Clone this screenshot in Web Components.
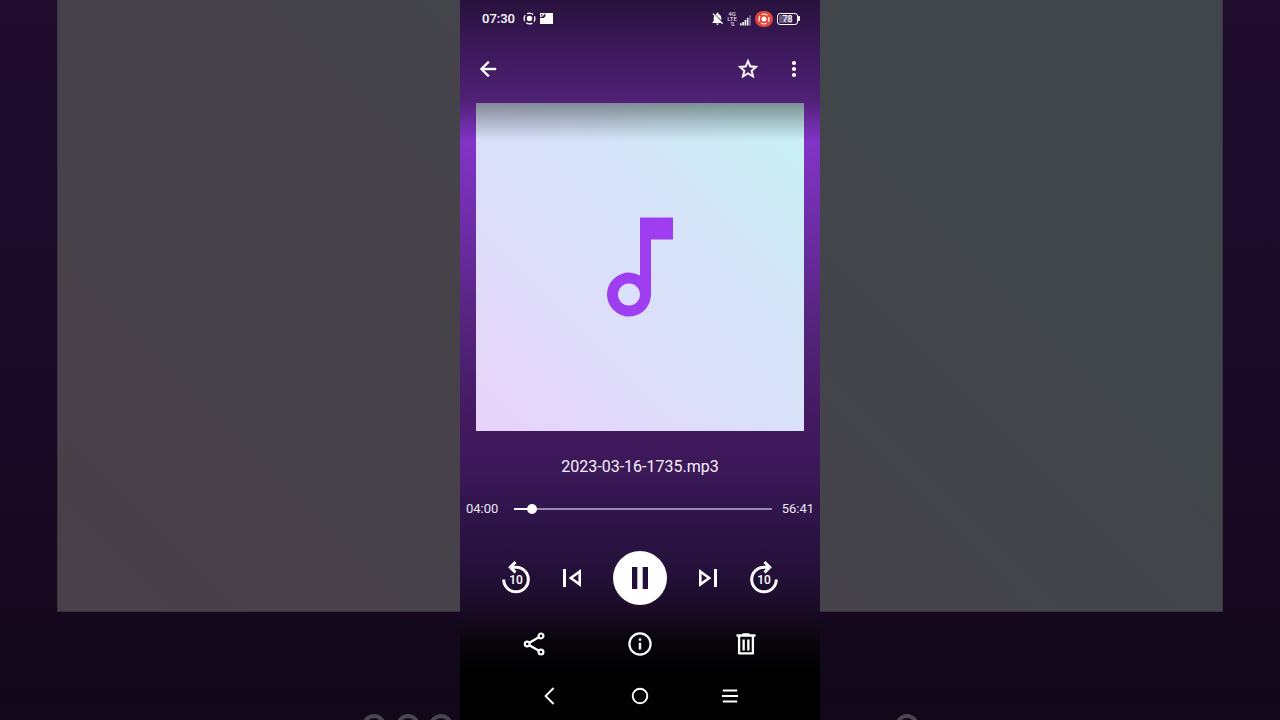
<!DOCTYPE html>
<html lang="en">
<head>
<meta charset="utf-8">
<meta name="viewport" content="width=device-width, initial-scale=1">
<title>Audio player</title>
<style>
  body {
    margin: 0;
    background: #000;
    color: #fff;
    font-family: Roboto, "Liberation Sans", sans-serif;
  }
</style>
</head>
<body>
<audio-page track="2023-03-16-1735.mp3"></audio-page>

<script>
const ICONS = {
  back: '<path fill="currentColor" stroke="currentColor" stroke-width=".4" d="M20 11H7.83l5.59-5.59L12 4l-8 8 8 8 1.41-1.41L7.83 13H20z"/>',
  star: '<path fill="currentColor" stroke="currentColor" stroke-width=".4" d="M22 9.24l-7.19-.62L12 2 9.19 8.63 2 9.24l5.46 4.73L5.82 21 12 17.27 18.18 21l-1.63-7.03zM12 15.4l-3.76 2.27 1-4.28-3.32-2.88 4.38-.38L12 6.1l1.71 4.04 4.38.38-3.32 2.88 1 4.28z"/>',
  more: '<g fill="currentColor"><circle cx="12" cy="6" r="2.1"/><circle cx="12" cy="12" r="2.1"/><circle cx="12" cy="18" r="2.1"/></g>',
  note: '<path fill="currentColor" fill-rule="evenodd" d="M12 3v10.55A4 4 0 1 0 14 17V7h4V3zM10 19a2 2 0 1 1 0-4 2 2 0 0 1 0 4z"/>',
  previous: '<path fill="currentColor" d="M3 3h3v18H3z"/><path fill="none" stroke="currentColor" stroke-width="2.6" d="M19.7 5.5L10.8 12l8.9 6.5z"/>',
  next: '<path fill="currentColor" d="M18 3h3v18h-3z"/><path fill="none" stroke="currentColor" stroke-width="2.6" d="M4.3 5.5l8.9 6.5-8.9 6.5z"/>',
  pause: '<path fill="currentColor" d="M4 1h5.3v22H4zM14.7 1H20v22h-5.3z"/>',
  share: '<g fill="none" stroke="currentColor" stroke-width="2.2"><circle cx="5.2" cy="12" r="2.4"/><circle cx="19" cy="3.9" r="2.4"/><circle cx="19" cy="20.1" r="2.4"/><path d="M7.4 10.8l9.4-5.6M7.4 13.2l9.4 5.6"/></g>',
  info: '<circle cx="12" cy="12" r="10.6" fill="none" stroke="currentColor" stroke-width="2.2"/><path fill="currentColor" d="M10.8 10.8h2.4v6.8h-2.4zM10.8 6.4h2.4v2.4h-2.4z"/>',
  trash: '<path fill="currentColor" d="M2.5 2.2h6V1.2h7v1h6v2.6h-19z"/><path fill="none" stroke="currentColor" stroke-width="2.3" stroke-linejoin="round" d="M5.1 4v17.4h13.8V4"/><path fill="currentColor" d="M8.5 7.5h2.3v11H8.5zM13.2 7.5h2.3v11h-2.3z"/>',
  navBack: '<path fill="none" stroke="currentColor" stroke-width="1.9" d="M15.600 4l-8 8 8 8"/>',
  navHome: '<circle cx="12" cy="12" r="7.3" fill="none" stroke="currentColor" stroke-width="1.9"/>',
  navMenu: '<path stroke="currentColor" stroke-width="1.9" d="M4.800 6.500h14.400M4 12h16M4.800 17.500h14.400"/>',
  record: '<circle cx="12" cy="12" r="5" fill="currentColor"/><circle cx="12" cy="12" r="10" fill="none" stroke="currentColor" stroke-width="2.400" stroke-dasharray="11.7 4" stroke-dashoffset="5.8"/>',
  card: '<path fill="currentColor" d="M10 2h14v20H0V11h7l3-3z"/><path fill="none" stroke="currentColor" stroke-width="2" d="M1 9V3h7L3 8.500"/>',
  bell: '<path fill="currentColor" d="M20 18.69L7.84 6.14 5.27 3.49 4 4.76l2.8 2.8C6.28 8.56 6 9.73 6 11v5l-2 2v1h13.73l2 2L21 19.73zM12 22c1.11 0 2-.89 2-2h-4c0 1.11.89 2 2 2zM18 14.68V11c0-3.08-1.64-5.64-4.5-6.32V4a1.5 1.5 0 0 0-3 0v.68c-.72.17-1.36.46-1.94.82z"/>',
  signal: '<path fill="currentColor" d="M0 18h3.500v5H0zM5 15h3.500v8H5zM10 11h3.500v12H10zM15 6h3.500v17H15z"/><path fill="currentColor" opacity=".4" d="M20 1h3.500v22H20z"/>'
}

class UiIcon extends HTMLElement {
  static get observedAttributes() {
    return ['name']
  }

  constructor() {
    super()
    this.attachShadow({ mode: 'open' })
  }

  connectedCallback() {
    this.render()
  }

  attributeChangedCallback() {
    if (this.isConnected) {
      this.render()
    }
  }

  render() {
    this.shadowRoot.innerHTML = `
      <style>
        :host {
          display: block;
          width: var(--size, 24px);
          height: var(--size, 24px);
        }

        svg {
          display: block;
          width: 100%;
          height: 100%;
        }
      </style>
      <svg viewBox="0 0 24 24" aria-hidden="true">${ICONS[this.getAttribute('name')] || ''}</svg>
    `
  }
}

class IconButton extends HTMLElement {
  constructor() {
    super()
    this.attachShadow({ mode: 'open' })
  }

  connectedCallback() {
    this.shadowRoot.innerHTML = `
      <style>
        :host {
          display: block;
        }

        button {
          display: grid;
          place-items: center;
          width: var(--box, 36px);
          height: var(--box, 36px);
          padding: 0;
          border: 0;
          border-radius: 50%;
          background: none;
          color: inherit;
          font: inherit;
          cursor: pointer;
        }

        :host([filled]) button {
          background: #fff;
          color: #22103a;
        }
      </style>
      <button type="button" aria-label="${this.getAttribute('label')}"><slot></slot></button>
    `
  }
}

// Circular arrow with the number of seconds inside
class SeekIcon extends HTMLElement {
  constructor() {
    super()
    this.attachShadow({ mode: 'open' })
  }

  connectedCallback() {
    const arrow = this.hasAttribute('forward')
      ? 'M30.3 19.5A12.3 12.3 0 1 1 18 7.2H23M18.5 2l5.2 5.2-5.2 5.2'
      : 'M5.7 19.5A12.3 12.3 0 1 0 18 7.2H13M17.5 2l-5.2 5.2 5.2 5.2'

    this.shadowRoot.innerHTML = `
      <style>
        :host {
          display: grid;
          place-items: center;
        }

        svg, span {
          grid-area: 1 / 1;
        }

        span {
          padding-top: 4px;
          font-size: 12px;
          font-weight: 500;
          line-height: 12px;
        }
      </style>
      <svg width="36" height="36" viewBox="0 0 36 36" fill="none" stroke="currentColor" stroke-width="3" aria-hidden="true"><path d="${arrow}"/></svg>
      <span><slot></slot></span>
    `
  }
}

class StatusBar extends HTMLElement {
  constructor() {
    super()
    this.attachShadow({ mode: 'open' })
  }

  connectedCallback() {
    this.shadowRoot.innerHTML = `
      <style>
        :host {
          display: flex;
          align-items: center;
          justify-content: space-between;
          height: 37px;
          padding: 0 20px 0 22px;
        }

        .group {
          display: flex;
          align-items: center;
          gap: 4px;
        }

        time {
          margin-right: 4px;
          font-size: 13px;
          font-weight: 500;
        }

        .small {
          --size: 13px;
        }

        .bell {
          --size: 15px;
        }

        .network {
          display: grid;
          justify-items: center;
          justify-content: center;
          width: 8px;
          margin-left: -1px;
          color: #e4dcea;
          font-size: 6px;
          font-weight: 500;
          line-height: 5px;
        }

        .signal {
          --size: 11px;
          padding-top: 3px;
        }

        .recording {
          display: grid;
          place-items: center;
          width: 18px;
          height: 16px;
          border-radius: 8px;
          background: #e0463a;
          --size: 12px;
        }

        .battery {
          display: flex;
          align-items: center;
        }

        .battery b {
          box-sizing: border-box;
          width: 21px;
          height: 12px;
          border: 1px solid #fff;
          border-radius: 3px;
          background: linear-gradient(90deg, #66557c 78%, transparent 0) content-box;
          padding: 1px;
          font-size: 9px;
          font-weight: 500;
          line-height: 8px;
          text-align: center;
        }

        .battery::after {
          content: "";
          width: 2px;
          height: 5px;
          border-radius: 0 1px 1px 0;
          background: #fff;
        }
      </style>
      <div class="group">
        <time>07:30</time>
        <ui-icon class="small" name="record"></ui-icon>
        <ui-icon class="small" name="card"></ui-icon>
      </div>
      <div class="group">
        <ui-icon class="bell" name="bell"></ui-icon>
        <div class="network"><span>4G</span><span>LTE</span><span>⇅</span></div>
        <ui-icon class="signal" name="signal"></ui-icon>
        <div class="recording"><ui-icon name="record"></ui-icon></div>
        <div class="battery"><b>78</b></div>
      </div>
    `
  }
}

class SeekBar extends HTMLElement {
  constructor() {
    super()
    this.attachShadow({ mode: 'open' })
  }

  format(seconds) {
    const pad = n => String(n).padStart(2, '0')
    return `${pad(Math.floor(seconds / 60))}:${pad(seconds % 60)}`
  }

  connectedCallback() {
    const position = Number(this.getAttribute('position'))
    const duration = Number(this.getAttribute('duration'))

    this.shadowRoot.innerHTML = `
      <style>
        :host {
          display: grid;
          grid-template-columns: 43px 1fr 37px;
          align-items: center;
          height: 24px;
          padding: 0 6px;
          font-size: 13px;
          line-height: 24px;
        }

        label, output {
          color: #ece6f2;
        }

        output {
          text-align: right;
        }

        input {
          appearance: none;
          width: 100%;
          height: 10px;
          margin: 0;
          background: linear-gradient(90deg, #fff var(--played), #9a88ab 0) center / calc(100% - 10px) 2px no-repeat;
        }

        input::-webkit-slider-thumb {
          appearance: none;
          width: 10px;
          height: 10px;
          border-radius: 50%;
          background: #fff;
        }
      </style>
      <label for="seek">${this.format(position)}</label>
      <input id="seek" type="range" min="0" max="${duration}" value="${position}">
      <output for="seek">${this.format(duration)}</output>
    `

    const input = this.shadowRoot.querySelector('input')
    const update = () => {
      input.style.setProperty('--played', `${(input.value / duration) * 100}%`)
      this.shadowRoot.querySelector('label').textContent = this.format(Number(input.value))
    }
    input.addEventListener('input', update)
    update()
  }
}

// Enlarged, darkened cover behind the player
class CoverBackdrop extends HTMLElement {
  constructor() {
    super()
    this.attachShadow({ mode: 'open' })
  }

  connectedCallback() {
    this.shadowRoot.innerHTML = `
      <style>
        :host {
          display: flex;
          flex-direction: column;
          align-items: center;
          justify-content: space-between;
          height: 100vh;
          overflow: hidden;
          background: linear-gradient(#200d2f, #1c0b29 45%, #17081f 82%, #110819 92%, #13071a);
        }

        .cover {
          box-sizing: border-box;
          flex: none;
          width: 91.1%;
          height: 85vh;
          border: solid #38333e;
          border-width: 0 1px 1px;
          background: linear-gradient(45deg, #494049, #46424a 40%, #43444b 60%, #40474a 80%);
        }

        svg {
          flex: none;
          display: block;
          width: 100%;
        }
      </style>
      <div class="cover"></div>
      <svg viewBox="0 0 1280 6" fill="none" stroke="#4a464c" stroke-width="4" aria-hidden="true">
        <circle cx="374" cy="12" r="10"/>
        <circle cx="408" cy="12" r="10"/>
        <circle cx="441" cy="12" r="10"/>
        <circle cx="907" cy="12" r="10"/>
      </svg>
    `
  }
}

class AudioPlayer extends HTMLElement {
  constructor() {
    super()
    this.attachShadow({ mode: 'open' })
  }

  connectedCallback() {
    this.shadowRoot.innerHTML = `
      <style>
        :host {
          display: flex;
          flex-direction: column;
          width: 100%;
          max-width: 360px;
          min-height: 100vh;
          background: linear-gradient(#28123c, #3a1858 45px, #4e2074 98px, #8234c6 142px, #6f2daa 220px, #56257f 320px, #42195f 420px, #3b1858 470px, #2e1448 520px, #25103a 570px, #1a0b26 610px, #09050d 640px, #000 672px);
        }

        header {
          display: flex;
          align-items: center;
          height: 64px;
          padding: 0 8px 0 10px;
        }

        .spacer {
          flex: 1;
        }

        .actions-top {
          display: flex;
          gap: 10px;
        }

        .cover {
          display: grid;
          place-items: center;
          aspect-ratio: 1;
          margin: 2px 16px 0;
          color: #9f3df0;
          background:
            linear-gradient(rgba(0, 0, 0, 0.4), rgba(0, 0, 0, 0.2) 18px, transparent 38px),
            linear-gradient(45deg, #e8d3fa, #dcdffa 40%, #d5e4f8 65%, #caeff5 90%);
          --size: 132px;
        }

        h1 {
          margin: 24px 16px 18px;
          color: #f6f2fa;
          font-size: 16px;
          font-weight: 400;
          line-height: 24px;
          text-align: center;
        }

        .controls {
          display: flex;
          align-items: center;
          justify-content: center;
          gap: 20px;
          margin-top: 30px;
        }

        .play {
          margin: 0 3px;
          --box: 54px;
        }

        .actions {
          display: flex;
          justify-content: space-between;
          margin: 21px 56px 10px;
        }

        nav {
          display: flex;
          justify-content: center;
          gap: 42px;
          margin-top: auto;
          --box: 48px;
        }
      </style>
      <status-bar></status-bar>
      <header>
        <icon-button label="Back"><ui-icon name="back"></ui-icon></icon-button>
        <span class="spacer"></span>
        <div class="actions-top">
          <icon-button label="Favourite"><ui-icon name="star"></ui-icon></icon-button>
          <icon-button label="More"><ui-icon name="more"></ui-icon></icon-button>
        </div>
      </header>
      <div class="cover"><ui-icon name="note"></ui-icon></div>
      <h1><slot></slot></h1>
      <seek-bar position="240" duration="3401"></seek-bar>
      <div class="controls">
        <icon-button label="Back 10 seconds"><seek-icon>10</seek-icon></icon-button>
        <icon-button label="Previous"><ui-icon name="previous"></ui-icon></icon-button>
        <icon-button class="play" label="Pause" filled><ui-icon name="pause"></ui-icon></icon-button>
        <icon-button label="Next"><ui-icon name="next"></ui-icon></icon-button>
        <icon-button label="Forward 10 seconds"><seek-icon forward>10</seek-icon></icon-button>
      </div>
      <div class="actions">
        <icon-button label="Share"><ui-icon name="share"></ui-icon></icon-button>
        <icon-button label="Info"><ui-icon name="info"></ui-icon></icon-button>
        <icon-button label="Delete"><ui-icon name="trash"></ui-icon></icon-button>
      </div>
      <nav>
        <icon-button label="System back"><ui-icon name="navBack"></ui-icon></icon-button>
        <icon-button label="Home"><ui-icon name="navHome"></ui-icon></icon-button>
        <icon-button label="Recent apps"><ui-icon name="navMenu"></ui-icon></icon-button>
      </nav>
    `
  }
}

class AudioPage extends HTMLElement {
  constructor() {
    super()
    this.attachShadow({ mode: 'open' })
  }

  connectedCallback() {
    this.shadowRoot.innerHTML = `
      <style>
        :host {
          display: grid;
          min-height: 100vh;
        }

        cover-backdrop, audio-player {
          grid-area: 1 / 1;
        }

        audio-player {
          justify-self: center;
          z-index: 1;
        }
      </style>
      <cover-backdrop></cover-backdrop>
      <audio-player>${this.getAttribute('track')}</audio-player>
    `
  }
}

customElements.define('ui-icon', UiIcon)
customElements.define('icon-button', IconButton)
customElements.define('seek-icon', SeekIcon)
customElements.define('status-bar', StatusBar)
customElements.define('seek-bar', SeekBar)
customElements.define('cover-backdrop', CoverBackdrop)
customElements.define('audio-player', AudioPlayer)
customElements.define('audio-page', AudioPage)
</script>
</body>
</html>
